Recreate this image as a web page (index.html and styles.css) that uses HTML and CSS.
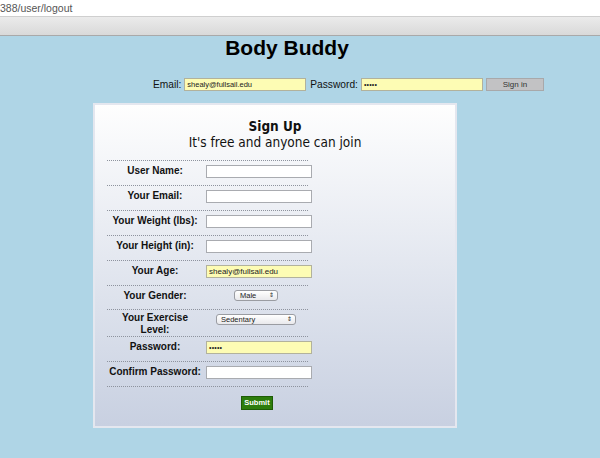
FILE: index.html
```html
<!DOCTYPE html>
<html>
<head>
<meta charset="utf-8">
<link rel="stylesheet" href="styles.css">
</head>
<body>
<div class="urlbar">388/user/logout</div>
<div class="toolbar"></div>
<div class="page">
  <h1 class="title">Body Buddy</h1>
  <div class="login">
    <span class="login-label">Email:</span>
    <span class="field field-top filled">shealy@fullsail.edu</span>
    <span class="login-label pw-label">Password:</span>
    <span class="field field-top filled dots">&bull;&bull;&bull;&bull;&bull;</span>
    <span class="signin">Sign in</span>
  </div>
  <div class="card">
    <div class="card-head">
      <div class="card-title">Sign Up</div>
      <div class="card-sub">It's free and anyone can join</div>
    </div>
    <div class="form">
      <div class="row"><span class="label">User Name:</span><span class="field"></span></div>
      <div class="row"><span class="label">Your Email:</span><span class="field"></span></div>
      <div class="row"><span class="label">Your Weight (lbs):</span><span class="field"></span></div>
      <div class="row"><span class="label">Your Height (in):</span><span class="field"></span></div>
      <div class="row"><span class="label">Your Age:</span><span class="field filled">shealy@fullsail.edu</span></div>
      <div class="row row-select"><span class="label">Your Gender:</span><span class="select select-gender"><span>Male</span><span class="arrows">&#8661;</span></span></div>
      <div class="row row-tall"><span class="label">Your Exercise Level:</span><span class="select select-level"><span>Sedentary</span><span class="arrows">&#8661;</span></span></div>
      <div class="row"><span class="label">Password:</span><span class="field filled dots">&bull;&bull;&bull;&bull;&bull;</span></div>
      <div class="row row-last"><span class="label">Confirm Password:</span><span class="field"></span></div>
      <div class="submit-row"><span></span><span class="submit">Submit</span></div>
    </div>
  </div>
</div>
</body>
</html>
```
FILE: styles.css
```css
html, body {
  margin: 0;
  padding: 0;
}
body {
  background: #afd5e6;
  font-family: "Liberation Sans", Arial, sans-serif;
  color: #111;
  width: 600px;
  height: 458px;
  overflow: hidden;
}
.urlbar {
  height: 16px;
  background: #fff;
  border-bottom: 1px solid #cfcfcf;
  font-size: 10.5px;
  line-height: 16px;
  color: #555;
  white-space: nowrap;
}
.toolbar {
  height: 18px;
  background: linear-gradient(#ebebeb, #d9d9d9);
  border-bottom: 1px solid #a9a9a9;
}
.page {
  display: flex;
  flex-direction: column;
}
.title {
  margin: 0;
  width: 574px;
  text-align: center;
  font-size: 21px;
  line-height: 24px;
  font-weight: bold;
  color: #000;
}
.login {
  display: flex;
  align-items: center;
  gap: 3px;
  margin: 18px 0 0 153px;
  height: 13px;
}
.login-label {
  font-size: 10.2px;
  line-height: 13px;
  color: #111;
}
.pw-label {
  margin-left: 1px;
}
.field {
  display: block;
  box-sizing: border-box;
  width: 106px;
  height: 13px;
  background: #fff;
  border: 1px solid #a9abb0;
  font-size: 8px;
  line-height: 11px;
  padding: 0 2px;
  color: #222;
  white-space: nowrap;
  overflow: hidden;
}
.field-top {
  width: 122px;
  font-size: 7.5px;
}
.filled {
  background: #fdfcb4;
  border-color: #b2b29c;
}
.dots {
  font-size: 7px;
  letter-spacing: 0.2px;
}
.signin {
  display: block;
  box-sizing: border-box;
  width: 58px;
  height: 13px;
  background: #c2c2c4;
  border: 1px solid #a8a8aa;
  font-size: 8px;
  line-height: 11px;
  text-align: center;
  color: #333;
}
.card {
  box-sizing: border-box;
  margin: 12px 0 0 93px;
  width: 364px;
  height: 325px;
  border: 2px solid #e4e7ef;
  background: linear-gradient(#fefefe, #c8d0e1);
}
.card-head {
  padding-top: 13px;
  text-align: center;
  font-family: "DejaVu Sans Condensed", "Open Sans", "DejaVu Sans", sans-serif;
  color: #111;
}
.card-title {
  font-weight: bold;
  font-size: 13.5px;
  line-height: 16px;
}
.card-sub {
  font-size: 13.5px;
  line-height: 17px;
}
.form {
  margin: 9px 0 0 12px;
  width: 201px;
}
.row {
  display: grid;
  grid-template-columns: 96px 106px;
  column-gap: 3px;
  align-items: start;
  border-top: 1px dotted #8e939e;
  padding: 4px 0 7px;
}
.row-tall {
  padding: 2px 0 0;
}
.row-tall .select {
  margin-top: 2px;
}
.row-last {
  border-bottom: 1px dotted #8e939e;
}
.label {
  font-size: 10px;
  line-height: 12px;
  font-weight: bold;
  text-align: center;
  color: #111;
}
.select {
  justify-self: center;
  margin-right: 6px;
  box-sizing: border-box;
  height: 11px;
  display: flex;
  align-items: center;
  justify-content: space-between;
  border: 1px solid #9a9ca2;
  border-radius: 3px;
  background: linear-gradient(#ffffff, #e9e9ec);
  font-size: 7.5px;
  line-height: 9px;
  color: #222;
}
.select-gender {
  width: 44px;
  padding: 0 3px 0 5px;
}
.select-level {
  width: 80px;
  padding: 0 3px 0 4px;
}
.arrows {
  font-size: 6px;
  line-height: 9px;
}
.submit-row {
  display: grid;
  grid-template-columns: 96px 106px;
  column-gap: 3px;
  margin-top: 9px;
}
.submit {
  justify-self: center;
  margin-right: 4px;
  display: block;
  box-sizing: border-box;
  width: 32px;
  height: 14px;
  background: #2d7d0c;
  border: 1px solid #1e5c06;
  color: #fff;
  font-size: 7.5px;
  font-weight: bold;
  line-height: 12px;
  text-align: center;
}
```
